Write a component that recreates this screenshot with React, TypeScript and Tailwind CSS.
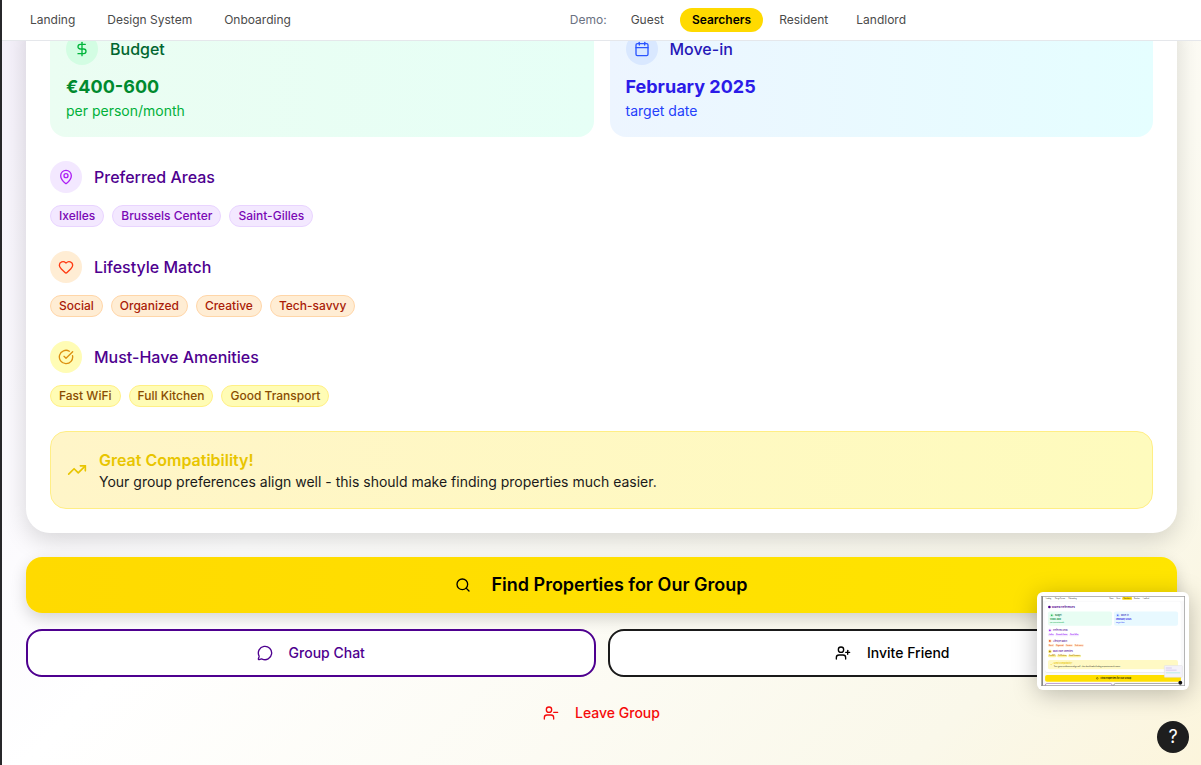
import { Calendar, CircleCheckBig, DollarSign, Heart, MapPin, MessageCircle, Search, TrendingUp, UserMinus, UserPlus } from "lucide-react";
import type { ReactNode } from "react";

function NavLink({ children }: { children: ReactNode }) {
  return <a href="#" className="rounded-full px-3 py-1 hover:bg-gray-100">{children}</a>;
}

type Group = { title: string; icon: ReactNode; circle: string; chip: string; items: string[] };

const groups: Group[] = [
  {
    title: "Preferred Areas",
    icon: <MapPin size={16} />,
    circle: "bg-purple-100 text-[#ad1ff5]",
    chip: "bg-purple-100 border-purple-200 text-[#7a08b5]",
    items: ["Ixelles", "Brussels Center", "Saint-Gilles"],
  },
  {
    title: "Lifestyle Match",
    icon: <Heart size={16} />,
    circle: "bg-orange-100 text-[#ff3a12]",
    chip: "bg-orange-100 border-[#ffd6a8] text-[#a91c08]",
    items: ["Social", "Organized", "Creative", "Tech-savvy"],
  },
  {
    title: "Must-Have Amenities",
    icon: <CircleCheckBig size={16} />,
    circle: "bg-[#fffcb5] text-[#dc9010]",
    chip: "bg-[#fffcb5] border-[#fff085] text-yellow-800",
    items: ["Fast WiFi", "Full Kitchen", "Good Transport"],
  },
];

const previewRows = [
  { y: 286, label: "Preferred Areas", color: "#9810fa", fill: "#f3e8ff", chips: [["Ixelles", 58, 53], ["Brussels Center", 119, 108], ["Saint-Gilles", 235, 83]] },
  { y: 374, label: "Lifestyle Match", color: "#e8450c", fill: "#ffedd4", chips: [["Social", 58, 52], ["Organized", 118, 75], ["Creative", 201, 65], ["Tech-savvy", 274, 83]] },
  { y: 462, label: "Must-Have Amenities", color: "#a87000", fill: "#fdf49b", chips: [["Fast WiFi", 58, 70], ["Full Kitchen", 135, 84], ["Good Transport", 227, 107]] },
] as const;

const previewNav = [
  ["Landing", 40], ["Design System", 116], ["Onboarding", 230], ["Demo:", 570],
  ["Guest", 629], ["Searchers", 688], ["Resident", 775], ["Landlord", 851],
] as const;

function Preview() {
  return (
    <svg viewBox="0 0 1200 750" className="block h-full w-full" fontFamily="Inter, sans-serif" aria-hidden="true">
      <rect width="1200" height="750" fill="#f9f9fa" />
      <rect width="1200" height="40" fill="#fff" />
      <rect x="677" y="8" width="82" height="24" rx="8" fill="#ffda00" />
      {previewNav.map(([label, x]) => (
        <text key={label} x={x} y="24" fontSize="12" fill="#222">{label}</text>
      ))}
      <rect x="34" y="48" width="1132" height="592" rx="24" fill="#e9e9ec" />
      <rect x="34" y="46" width="1132" height="588" rx="24" fill="#fff" />
      <circle cx="70" cy="92" r="11" fill="#4e008f" />
      <text x="90" y="99" fontSize="20" fontWeight="700" fill="#4e008f">Shared Preferences</text>
      <rect x="58" y="130" width="534" height="117" rx="16" fill="#e8fdf3" />
      <rect x="608" y="130" width="534" height="117" rx="16" fill="#e8f9ff" />
      <circle cx="90" cy="161" r="16" fill="#c6f5d7" />
      <circle cx="90" cy="161" r="6" fill="#00a63e" />
      <text x="117" y="167" fontSize="16" fontWeight="500" fill="#016630">Budget</text>
      <text x="74" y="204" fontSize="18" fontWeight="700" fill="#008a2e">€400-600</text>
      <text x="74" y="227" fontSize="14" fill="#00a63e">per person/month</text>
      <circle cx="640" cy="161" r="16" fill="#cfe3ff" />
      <circle cx="640" cy="161" r="6" fill="#2b55ff" />
      <text x="667" y="167" fontSize="16" fontWeight="500" fill="#2518b8">Move-in</text>
      <text x="624" y="204" fontSize="18" fontWeight="700" fill="#2b1be8">February 2025</text>
      <text x="624" y="227" fontSize="14" fill="#2440fb">target date</text>
      {previewRows.map((row) => (
        <g key={row.label}>
          <circle cx="74" cy={row.y} r="16" fill={row.fill} />
          <circle cx="74" cy={row.y} r="7" fill={row.color} />
          <text x="101" y={row.y + 6} fontSize="16" fontWeight="500" fill="#4e008f">{row.label}</text>
          {row.chips.map(([label, x, width]) => (
            <g key={label}>
              <rect x={x} y={row.y + 27} width={width} height="22" rx="11" fill={row.fill} />
              <text x={x + 9} y={row.y + 42} fontSize="12" fontWeight="600" fill={row.color}>{label}</text>
            </g>
          ))}
        </g>
      ))}
      <rect x="58" y="533" width="1084" height="78" rx="16" fill="#fff9c4" />
      <path d="m77 575 7-7 4 4 8-8" fill="none" stroke="#e8c500" strokeWidth="3" />
      <text x="107" y="566" fontSize="16" fontWeight="600" fill="#e8c500">Great Compatibility!</text>
      <text x="107" y="588" fontSize="14" fill="#1a1a1a">Your group preferences align well - this should make finding properties much easier.</text>
      <rect x="34" y="658" width="1132" height="56" rx="16" fill="#ffdf00" />
      <circle cx="469" cy="686" r="7" fill="none" stroke="#000" strokeWidth="3" />
      <text x="496" y="692" fontSize="18" fontWeight="600">Find Properties for Our Group</text>
      <rect x="35" y="729" width="558" height="48" rx="16" fill="#fff" stroke="#4e008f" strokeWidth="3" />
      <rect x="606" y="729" width="558" height="48" rx="16" fill="#fff" stroke="#1a1a1a" strokeWidth="3" />
      <rect x="1028" y="580" width="150" height="98" rx="6" fill="#f4f2fa" stroke="#ddd" strokeWidth="4" />
      <path d="M1040 600h50M1040 618h90" stroke="#c5b0e8" strokeWidth="5" />
      <path d="M1040 640h120" stroke="#b9ece5" strokeWidth="8" />
      <circle cx="1161" cy="722" r="16" fill="#111" />
      <path d="M11 0v750" stroke="#666" strokeWidth="8" />
      <rect x="3" y="3" width="1194" height="744" fill="none" stroke="#999" strokeWidth="6" />
    </svg>
  );
}

export default function App() {
  return (
    <div className="min-h-screen overflow-hidden border-l-2 border-[#27272a] bg-[linear-gradient(135deg,#f4f0fa_0%,#ffffff_40%,#faf8ea_85%,#fcf5dc_100%)] font-['Inter',sans-serif] text-black">
      <nav className="sticky top-0 z-10 flex h-[41px] items-center justify-between border-b border-gray-200 bg-white px-4 text-xs text-[#4a4a4a]">
        <div className="flex items-center gap-2">
          <NavLink>Landing</NavLink>
          <NavLink>Design System</NavLink>
          <NavLink>Onboarding</NavLink>
        </div>
        <div className="flex items-center gap-1">
          <span className="mr-2 text-gray-500">Demo:</span>
          <NavLink>Guest</NavLink>
          <a href="#" aria-current="page" className="rounded-full bg-[#ffda00] px-3 py-1 font-semibold text-black">Searchers</a>
          <NavLink>Resident</NavLink>
          <NavLink>Landlord</NavLink>
        </div>
        <div />
      </nav>

      <main className="-mt-6 px-6">
        <section className="flex flex-col gap-6 rounded-b-3xl bg-white px-6 pb-6 shadow-[0_8px_24px_rgba(0,0,0,0.15)]">
          <div className="grid grid-cols-2 gap-4">
            <div className="rounded-b-2xl bg-linear-to-r from-[#ebfdf2] to-[#e6fff6] p-4">
              <div className="mb-2 flex items-center gap-3">
                <span className="flex size-8 items-center justify-center rounded-full bg-[#d3fde3] text-[#00b53b]"><DollarSign size={16} /></span>
                <h2 className="font-medium text-[#016630]">Budget</h2>
              </div>
              <p className="text-lg font-bold text-[#008a2e]">€400-600</p>
              <p className="text-sm text-[#00b03a]">per person/month</p>
            </div>
            <div className="rounded-b-2xl bg-linear-to-r from-[#edf5ff] to-[#e5feff] p-4">
              <div className="mb-2 flex items-center gap-3">
                <span className="flex size-8 items-center justify-center rounded-full bg-[#d9e8ff] text-[#2b55ff]"><Calendar size={16} /></span>
                <h2 className="font-medium text-[#2518b8]">Move-in</h2>
              </div>
              <p className="text-lg font-bold text-[#2b1be8]">February 2025</p>
              <p className="text-sm text-[#2440fb]">target date</p>
            </div>
          </div>

          {groups.map((group) => (
            <div key={group.title}>
              <div className="mb-3 flex items-center gap-3">
                <span className={`flex size-8 items-center justify-center rounded-full ${group.circle}`}>{group.icon}</span>
                <h2 className="font-medium text-[#4e008f]">{group.title}</h2>
              </div>
              <ul className="flex flex-wrap gap-2">
                {group.items.map((item) => (
                  <li key={item} className={`rounded-full border px-2 py-0.5 text-xs font-medium ${group.chip}`}>{item}</li>
                ))}
              </ul>
            </div>
          ))}

          <div className="flex items-center gap-3 rounded-2xl border border-[#ffee85] bg-linear-to-r from-[#fff5c8] to-[#fefbbd] p-4">
            <TrendingUp size={20} className="text-[#e8c500]" />
            <div>
              <p className="font-semibold text-[#e8c500]">Great Compatibility!</p>
              <p className="text-sm text-[#1a1a1a]">Your group preferences align well - this should make finding properties much easier.</p>
            </div>
          </div>
        </section>

        <div className="mt-6 flex flex-col gap-4">
          <button className="flex h-14 items-center justify-center gap-5 rounded-2xl bg-linear-to-r from-[#ffda00] to-[#ffe500] text-lg font-semibold shadow-[0_6px_16px_rgba(0,0,0,0.16)]">
            <Search size={16} />
            Find Properties for Our Group
          </button>
          <div className="grid grid-cols-2 gap-3 text-sm font-medium">
            <button className="flex h-12 items-center justify-center gap-4 rounded-2xl border-2 border-[#4e008f] bg-white text-[#4e008f]">
              <MessageCircle size={16} />
              Group Chat
            </button>
            <button className="flex h-12 items-center justify-center gap-4 rounded-2xl border-2 border-[#1a1a1a] bg-white">
              <UserPlus size={16} />
              Invite Friend
            </button>
          </div>
          <button className="flex h-10 items-center justify-center gap-4 text-sm font-medium text-[#f50a0a]">
            <UserMinus size={16} />
            Leave Group
          </button>
        </div>
      </main>

      <a href="#" aria-label="Open preview" className="fixed right-3 bottom-[75px] z-20 h-[98px] w-[152px] rounded-md bg-white p-1 shadow-[0_4px_24px_rgba(0,0,0,0.25)]">
        <Preview />
      </a>
      <button aria-label="Help" className="fixed right-3 bottom-3 z-20 flex size-8 items-center justify-center rounded-full bg-[#1e1e1e] text-lg text-white">?</button>
    </div>
  );
}
